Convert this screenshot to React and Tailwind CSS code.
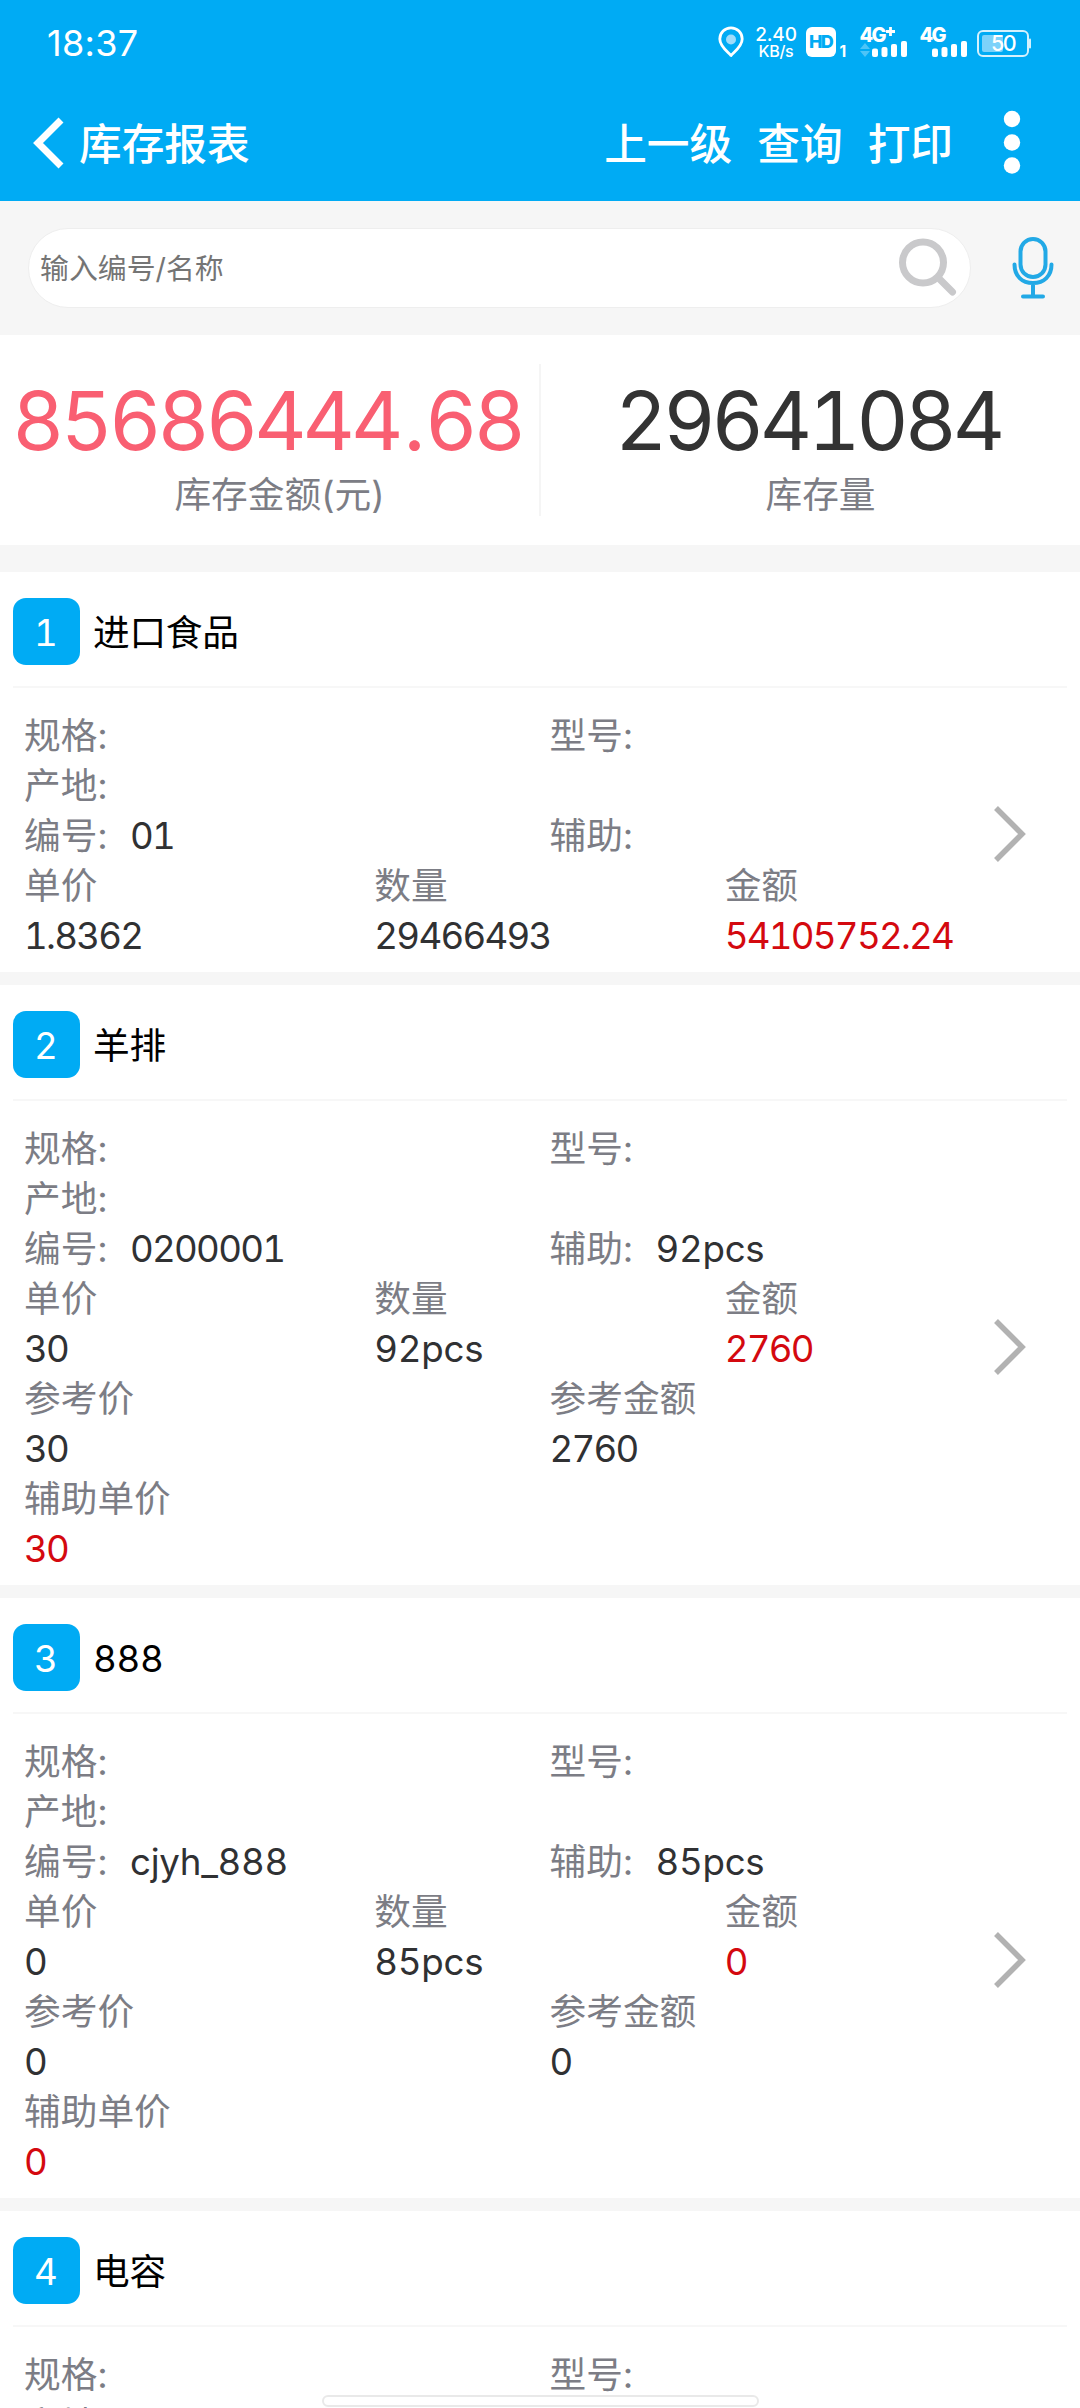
import React from 'react';

const items = [
  { id: 1, name: '进口食品', code: '01', aux: '', price: '1.8362', qty: '29466493', amount: '54105752.24' },
  { id: 2, name: '羊排', code: '0200001', aux: '92pcs', price: '30', qty: '92pcs', amount: '2760', refPrice: '30', refAmount: '2760', auxPrice: '30' },
  { id: 3, name: '888', code: 'cjyh_888', aux: '85pcs', price: '0', qty: '85pcs', amount: '0', refPrice: '0', refAmount: '0', auxPrice: '0' },
  { id: 4, name: '电容', code: '', aux: '', price: '', qty: '', amount: '' },
];

function SignalBars({ plus }) {
  return (
    <svg className="overflow-visible" width="48" height="32" viewBox="0 0 48 32" fill="#fff">
      <text x="-0.5" y="15.500" fontSize="20" fontWeight="800" letterSpacing="-1.800">4G</text>
      {plus && <path d="M30.500 1v9M26 5.500h9" stroke="#fff" strokeWidth="2.800" />}
      {plus && <path d="M5 17l5 6H0zM5 31l5-6H0z" opacity="0.3" />}
      <rect x="12" y="22.500" width="6" height="8.500" rx="2" />
      <rect x="21.500" y="21" width="6" height="10" rx="2" />
      <rect x="31" y="18" width="6" height="13" rx="2" />
      <rect x="41" y="15" width="6" height="16" rx="2" />
    </svg>
  );
}

function StatusBar() {
  return (
    <div className="h-[84px] flex items-start justify-between pl-[47px] pr-[48px] pt-[26px] text-white">
      <span className="text-[36px] leading-[34px] tracking-[0.3px]">18:37</span>
      <div className="flex items-start">
        <svg className="mr-[12px]" width="26" height="32" viewBox="0 0 26 32" fill="none">
          <path d="M13 29.500C10 26 1.800 20.500 1.800 13A11.200 11.200 0 0 1 24.200 13C24.200 20.500 16 26 13 29.500Z" stroke="#fff" strokeWidth="2.800" strokeLinejoin="round" />
          <circle cx="13" cy="13.500" r="5" fill="#9fdcfb" />
        </svg>
        <div className="w-[40px] mr-[10px] flex flex-col items-center font-medium">
          <span className="text-[19px] leading-[17px] tracking-[-0.2px]">2.40</span>
          <span className="text-[16px] leading-[16px] tracking-[-0.3px]">KB/s</span>
        </div>
        <svg className="mr-[13px] overflow-visible" width="41" height="32" viewBox="0 0 41 32">
          <rect x="0" y="1" width="30" height="30" rx="6" fill="#fff" />
          <text x="14.500" y="22" fontSize="18" fontWeight="800" textAnchor="middle" letterSpacing="-1.800" fill="#00abf4">HD</text>
          <text x="33.500" y="30.500" fontSize="15.500" fontWeight="700" fill="#fff">1</text>
        </svg>
        <div className="mr-[12px]"><SignalBars plus /></div>
        <div className="mr-[9px]"><SignalBars /></div>
        <svg width="55" height="32" viewBox="0 0 55 32">
          <rect x="1" y="5" width="50" height="25" rx="5" fill="none" stroke="#d4f1fd" strokeWidth="2" />
          <rect x="5" y="9" width="21" height="17" rx="2" fill="#7dd2fa" />
          <path d="M53 13.500v8" stroke="#d4f1fd" strokeWidth="2" strokeLinecap="round" />
          <text x="26" y="25" fontSize="21.500" fontWeight="500" textAnchor="middle" letterSpacing="-1.500" fill="#fff">50</text>
        </svg>
      </div>
    </div>
  );
}

function TopBar() {
  return (
    <div className="h-[117px] flex items-center text-white text-[42.7px] leading-[50px] font-medium">
      <svg className="ml-[32px] mt-px" width="32" height="52" viewBox="0 0 32 52" fill="none" stroke="#fff" strokeWidth="7">
        <path d="M29 3L6 26L29 49" />
      </svg>
      <span className="ml-[15px] pt-[4px]">库存报表</span>
      <div className="ml-auto flex items-center">
        <span className="pt-[4px]">上一级</span>
        <span className="ml-[25px] pt-[4px]">查询</span>
        <span className="ml-[25px] pt-[4px]">打印</span>
        <svg className="ml-[50px] mr-[59px]" width="18" height="66" viewBox="0 0 18 66" fill="#fff">
          <circle cx="9" cy="9" r="8.200" />
          <circle cx="9" cy="32.500" r="8.200" />
          <circle cx="9" cy="55.500" r="8.200" />
        </svg>
      </div>
    </div>
  );
}

function SearchBar() {
  return (
    <div className="h-[134px] bg-[#f6f6f6] flex items-center pl-[28px] pr-[26px]">
      <div className="w-[943px] h-[80px] rounded-full bg-white border border-[#eeeeee] flex items-center justify-between pl-[11px] pr-[12px]">
        <span className="pt-[2px] text-[28.9px] text-[#757575]">输入编号/名称</span>
        <svg width="60" height="62" viewBox="0 0 60 62" fill="none" stroke="#c9c9cb" strokeWidth="7" strokeLinecap="round">
          <circle cx="25" cy="25.500" r="20.500" />
          <path d="M40 40.500L54.500 55" />
        </svg>
      </div>
      <svg className="ml-auto" width="42" height="64" viewBox="0 0 42 64" fill="none" stroke="#22a9e6" strokeWidth="4" strokeLinecap="round">
        <rect x="8.500" y="3" width="25" height="38" rx="12.500" />
        <path d="M2.500 28.500C2.500 40 10 47 21 47S39.500 40 39.500 28.500M21 47V60M11 60.500H31" />
      </svg>
    </div>
  );
}

function Summary() {
  return (
    <div className="h-[210px] bg-white flex items-center">
      <div className="w-[539px] pt-[11px] flex flex-col items-center">
        <div className="mr-[5px] text-[81px] leading-[98px] tracking-[-4.100px] tabular-nums text-[#f95f72]">
          85686444<span className="mx-[4px]">.</span>68
        </div>
        <span className="ml-[20px] text-[36.7px] leading-[50px] text-[#7c7d85]">库存金额(元)</span>
      </div>
      <div className="w-[2px] h-[152px] bg-[#f5f5f5]" />
      <div className="w-[539px] pt-[11px] flex flex-col items-center">
        <span className="mr-[5px] text-[81px] leading-[98px] tracking-[-4.300px] tabular-nums text-[#333333]">29641084</span>
        <span className="ml-[20px] text-[36.7px] leading-[50px] text-[#7c7d85]">库存量</span>
      </div>
    </div>
  );
}

// Plain numbers are set tighter than codes and units
function Value({ text, red }) {
  const isNumber = /^[\d.]+$/.test(text || '');
  return (
    <span className={`${isNumber ? 'tracking-[-1.750px]' : 'tracking-[-0.300px]'} ${red ? 'text-[#d4090f]' : 'text-[#303133]'}`}>
      {text}
    </span>
  );
}

function Field({ label, value }) {
  return (
    <div className="flex h-[50px]">
      <span className="w-[106px] text-[#7c7d85]">{label}</span>
      <Value text={value} />
    </div>
  );
}

function Column({ label, value, red }) {
  return (
    <div>
      <div className="h-[50px] text-[#7c7d85]">{label}</div>
      <div className="h-[50px]"><Value text={value} red={red} /></div>
    </div>
  );
}

function ItemCard({ item }) {
  return (
    <div className="bg-white mb-[13px] pb-[11px] text-[36.7px] leading-[50px] tabular-nums">
      <div className="mx-[13px] h-[116px] pt-[26px] border-b-2 border-[#f7f7f7] flex items-start">
        <div className="size-[67px] pt-[2px] pr-px rounded-[13px] bg-[#00abf4] text-white flex items-center justify-center">{item.id}</div>
        <span className="ml-[13px] mt-[10px] tracking-[-0.300px] text-black">{item.name}</span>
      </div>
      <div className="relative pt-[23px] pl-[24px] pr-[5px]">
        <div className="grid grid-cols-2">
          <Field label="规格:" />
          <Field label="型号:" />
          <div className="col-span-2"><Field label="产地:" /></div>
          <Field label="编号:" value={item.code} />
          <Field label="辅助:" value={item.aux} />
        </div>
        <div className="grid grid-cols-3">
          <Column label="单价" value={item.price} />
          <Column label="数量" value={item.qty} />
          <Column label="金额" value={item.amount} red />
        </div>
        {item.refPrice && (
          <div className="grid grid-cols-2">
            <Column label="参考价" value={item.refPrice} />
            <Column label="参考金额" value={item.refAmount} />
            <Column label="辅助单价" value={item.auxPrice} red />
          </div>
        )}
        <svg className="absolute right-[54px] top-1/2 -mt-[20px]" width="34" height="58" viewBox="0 0 34 58" fill="none" stroke="#b2b2b2" strokeWidth="5.500">
          <path d="M4 3L30 29L4 55" />
        </svg>
      </div>
    </div>
  );
}

function App() {
  return (
    <div className="relative w-[1080px] h-[2408px] overflow-hidden bg-[#f6f6f6] font-['Inter','Noto_Sans_CJK_SC',sans-serif]">
      <div className="bg-[#00abf4]">
        <StatusBar />
        <TopBar />
      </div>
      <SearchBar />
      <Summary />
      <div className="mt-[27px]">
        {items.map((item) => (
          <ItemCard key={item.id} item={item} />
        ))}
      </div>
      {/* Gesture handle */}
      <div className="absolute left-[322px] top-[2395px] w-[437px] h-[12px] rounded-full bg-white border-2 border-[#e9e9e9]" />
    </div>
  );
}

export default App;
